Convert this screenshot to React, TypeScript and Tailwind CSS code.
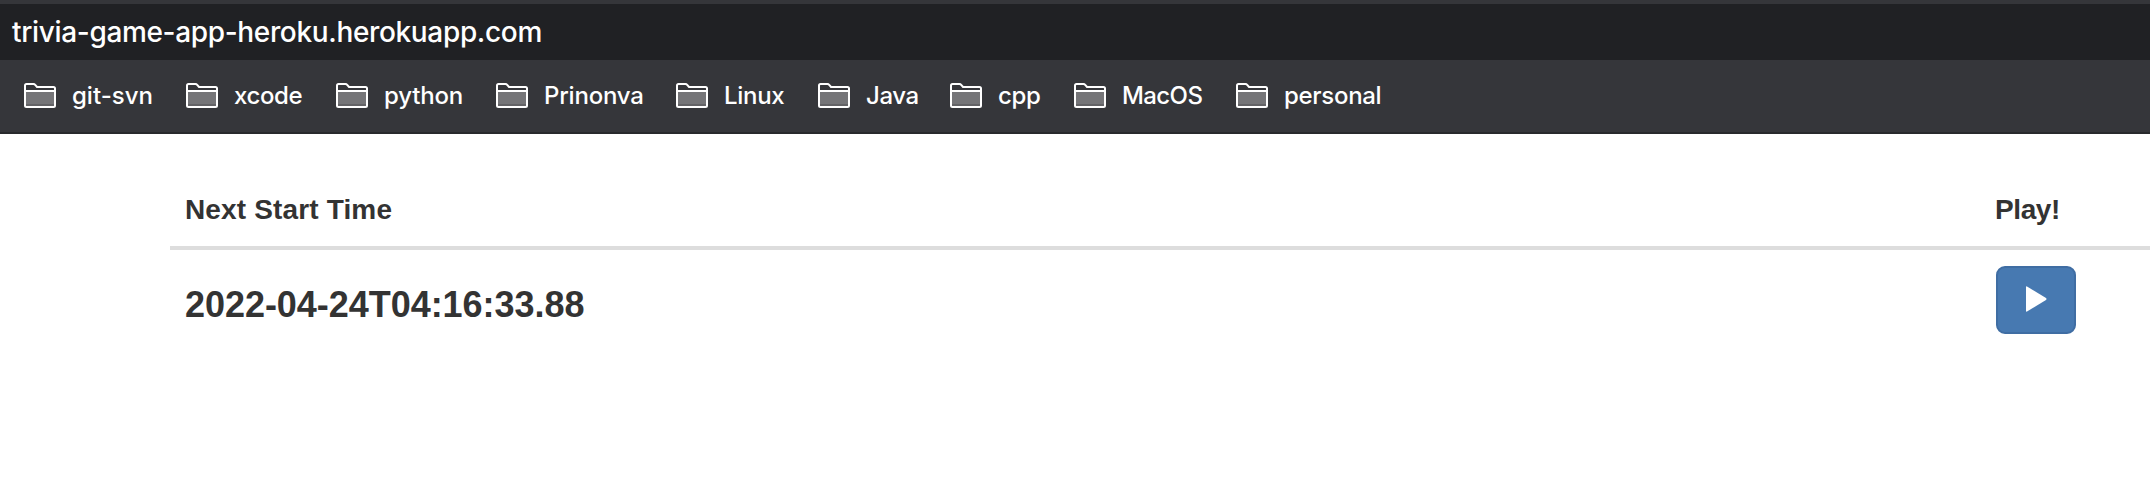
const bookmarks = [
  { name: "git-svn", box: "w-[162px]", text: "tracking-[0px]" },
  { name: "xcode", box: "w-[150px]", text: "tracking-[-0.4px]" },
  { name: "python", box: "w-[160px]", text: "tracking-[-0.2px]" },
  { name: "Prinonva", box: "w-[180px]", text: "tracking-[-0.2px]" },
  { name: "Linux", box: "w-[142px]", text: "tracking-[-0.3px]" },
  { name: "Java", box: "w-[132px]", text: "tracking-[-0.4px]" },
  { name: "cpp", box: "w-[124px]", text: "tracking-[-0.4px]" },
  { name: "MacOS", box: "w-[162px]", text: "tracking-[-0.6px]" },
  { name: "personal", box: "w-[162px]", text: "tracking-[-0.3px]" },
];

function FolderIcon() {
  return (
    <svg width="32" height="25" viewBox="0 0 32 25" className="mt-[23px] shrink-0" fill="none">
      <rect x="2" y="9" width="28" height="14" fill="#757578" />
      <rect x="2" y="21" width="28" height="2" fill="#636366" />
      <path d="M1 22.5V2.5Q1 1 2.5 1H9.5Q10.5 1 11.2 1.8L13 4H29.5Q31 4 31 5.5V22.5Q31 24 29.5 24H2.5Q1 24 1 22.5Z" stroke="#fff" strokeWidth="2" />
      <path d="M1 8H31" stroke="#fff" strokeWidth="2" />
    </svg>
  );
}

export default function App() {
  return (
    <div className="flex h-[502px] w-full flex-col overflow-hidden bg-white">
      <header className="h-[134px] shrink-0 border-b-2 border-[#28292c] bg-[#35363a] font-['Inter',sans-serif] font-medium text-white">
        <div className="h-1" />
        <div className="flex h-14 items-center bg-[#202124] pl-[12px] text-[28px] leading-[56px] tracking-[-0.34px]">
          <span className="whitespace-nowrap">trivia-game-app-heroku.herokuapp.com</span>
        </div>
        <nav className="flex h-[72px] pl-6">
          {bookmarks.map((b) => (
            <a key={b.name} className={`flex shrink-0 gap-4 ${b.box}`}>
              <FolderIcon />
              <span className={`text-[24px] leading-[72px] whitespace-nowrap ${b.text}`}>{b.name}</span>
            </a>
          ))}
        </nav>
      </header>
      <main className="pl-[170px] font-['Liberation_Sans',Arial,sans-serif] font-bold text-[#333]">
        <div className="flex h-[116px] border-b-4 border-[#ddd] pt-[56px] text-[28px] leading-[40px]">
          <div className="w-[1810px] pl-[15px] tracking-[0.15px]">Next Start Time</div>
          <div className="pl-[15px] tracking-[-0.4px]">Play!</div>
        </div>
        <div className="flex pt-4">
          <div className="w-[1810px] pt-[19px] pl-[15px] text-[36px] leading-[40px] tracking-[-0.04px]">2022-04-24T04:16:33.88</div>
          <button aria-label="Play" className="ml-4 flex h-[68px] w-20 rounded-[9px] border-2 border-[#3f6da3] bg-[#4779b1] pt-[18px] pl-7">
            <svg width="21" height="26" viewBox="0 0 21 26">
              <path d="M0 1Q0 0 1 .5L20 12Q21 13 20 14L1 25.5Q0 26 0 25Z" fill="#fff" />
            </svg>
          </button>
        </div>
      </main>
    </div>
  );
}
